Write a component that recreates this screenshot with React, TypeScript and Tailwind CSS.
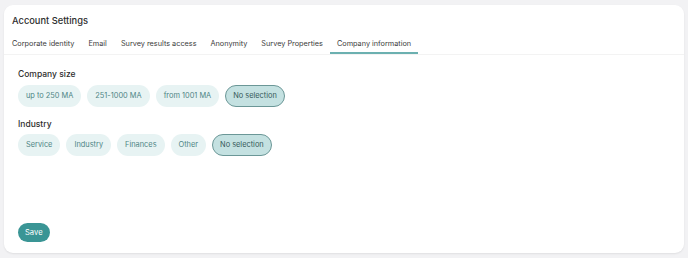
import React from "react";

const tabs = [
  "Corporate identity",
  "Email",
  "Survey results access",
  "Anonymity",
  "Survey Properties",
  "Company information",
];

function Chip({ label, selected }: { label: string; selected?: boolean }) {
  return (
    <div
      className={
        selected
          ? "h-[22px] px-[7px] rounded-full flex items-center text-[7.4px] bg-[#c4e1e1] border border-[#6b9797] text-[#365a5a]"
          : "h-[22px] px-[8px] rounded-full flex items-center text-[7.4px] bg-[#e7f3f3] text-[#4e8585]"
      }
    >
      {label}
    </div>
  );
}

export default function App() {
  return (
    <div
      className="w-[688px] h-[258px] bg-[#f2f2f4] pt-[5px] px-[4px] pb-[5px]"
      style={{ fontFamily: "Inter, 'Noto Sans', sans-serif" }}
    >
      <div className="h-[248px] bg-white rounded-[9px] shadow-[0_1px_2px_rgba(0,0,0,0.08)] flex flex-col">
        <div className="pl-[8px] pt-[9px] h-[30px] text-[9.3px] font-medium text-[#2e2e2e]">
          Account Settings
        </div>
        <div className="flex pl-[1px] border-b border-[#f3f3f3] h-[20px]">
          {tabs.map((t, i) => (
            <div
              key={t}
              className={
                i === 5
                  ? "px-[7px] h-full pt-[4px] text-[7.3px] text-[#3b3b3b] border-b-[2px] border-[#6bb0b0]"
                  : "px-[7px] h-full pt-[4px] text-[7.3px] text-[#3b3b3b]"
              }
            >
              {t}
            </div>
          ))}
        </div>
        <div className="pl-[14px] pt-[13px] flex flex-col flex-1">
          <div className="text-[8.5px] font-medium text-[#2e2e2e] h-[12px] leading-[12px]">Company size</div>
          <div className="flex gap-[6px] mt-[5px]">
            <Chip label="up to 250 MA" />
            <Chip label="251-1000 MA" />
            <Chip label="from 1001 MA" />
            <Chip label="No selection" selected />
          </div>
          <div className="text-[8.5px] font-medium text-[#2e2e2e] h-[12px] leading-[12px] mt-[11px]">Industry</div>
          <div className="flex gap-[6px] mt-[4px]">
            <Chip label="Service" />
            <Chip label="Industry" />
            <Chip label="Finances" />
            <Chip label="Other" />
            <Chip label="No selection" selected />
          </div>
          <div className="mt-[67px] flex">
            <button className="h-[19px] px-[7px] rounded-[10px] bg-[#3a9595] text-white text-[7.6px] leading-none">
              Save
            </button>
          </div>
        </div>
      </div>
    </div>
  );
}
